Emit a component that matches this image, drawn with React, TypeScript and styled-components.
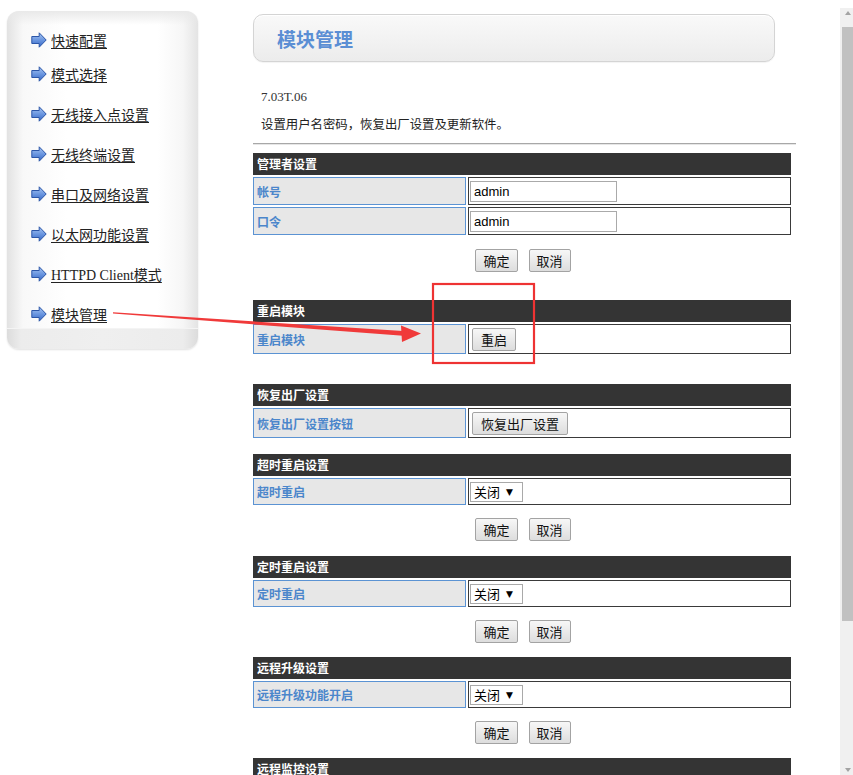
import React from 'react';
import styled, { createGlobalStyle } from 'styled-components';

const GlobalStyle = createGlobalStyle`
  html, body {
    margin: 0;
    padding: 0;
    background: #ffffff;
    overflow: hidden;
  }
  body {
    font-family: "Liberation Sans", "Noto Sans CJK SC", sans-serif;
    color: #222;
  }
`;

const CJK = `"Noto Sans CJK SC", "Liberation Sans", sans-serif`;

const Page = styled.div`
  position: relative;
  display: flex;
  align-items: flex-start;
  width: 853px;
  height: 775px;
  overflow: hidden;
`;

// ---------- left menu ----------

const Sidebar = styled.div`
  margin: 11px 0 0 7px;
  width: 191px;
  height: 338px;
  display: flex;
  flex-direction: column;
  border-radius: 12px;
  overflow: hidden;
  box-shadow: 0 1px 2px rgba(0, 0, 0, 0.12);
`;

const Nav = styled.ul`
  flex: 1;
  margin: 0;
  padding: 19px 0 0 24px;
  list-style: none;
  background:
    linear-gradient(to bottom, #e9e9e9 0, rgba(255, 255, 255, 0) 14px),
    linear-gradient(to right, #e2e2e2 0, #f8f8f8 16px, #ffffff 60px, #ffffff 150px, #f6f6f6 176px, #e4e4e4 100%);
`;

const NavItem = styled.li<{ $gap: number }>`
  display: flex;
  align-items: center;
  gap: 4px;
  height: 20px;
  margin-top: ${(p) => p.$gap}px;
`;

const NavLink = styled.a`
  font-family: "Liberation Serif", "Noto Sans CJK SC", serif;
  font-size: 14px;
  color: #222;
  text-decoration: underline;
  text-underline-offset: 2px;
  white-space: nowrap;
`;

const SideFoot = styled.div`
  height: 20px;
  background:
    linear-gradient(to right, #dcdcdc 0, #ececec 14px, #efefef 50%, #ececec 176px, #dcdcdc 100%);
  border-top: 1px solid #f4f4f4;
`;

const BlueArrow = () => (
  <svg width="16" height="16" viewBox="0 0 16 16">
    <defs>
      <linearGradient id="ba" x1="0" y1="0" x2="0" y2="1">
        <stop offset="0" stopColor="#a9c6f2" />
        <stop offset="0.5" stopColor="#6b97e0" />
        <stop offset="1" stopColor="#3566c4" />
      </linearGradient>
    </defs>
    <path d="M0.8 4.5 H8.2 V0.8 L15.2 8 L8.2 15.2 V11.5 H0.8 Z" fill="url(#ba)" stroke="#2b56a8" strokeWidth="1" strokeLinejoin="round" />
  </svg>
);

// ---------- main ----------

const Main = styled.div`
  margin: 14px 0 0 55px;
  width: 543px;
  display: flex;
  flex-direction: column;
`;

const TitleBox = styled.div`
  width: 522px;
  height: 48px;
  box-sizing: border-box;
  border: 1px solid #d4d4d4;
  border-radius: 10px;
  background: linear-gradient(to bottom, #f9f9f9, #ececec);
  box-shadow: inset 0 1px 0 #ffffff, 0 1px 1px rgba(0, 0, 0, 0.05);
  display: flex;
  align-items: center;
  padding-left: 23px;
`;

const Title = styled.h1`
  margin: 0;
  font-family: ${CJK};
  font-size: 19px;
  font-weight: bold;
  color: #5a8ed4;
`;

const Version = styled.div`
  margin: 25px 0 0 8px;
  font-family: "Liberation Serif", serif;
  font-size: 13px;
  line-height: 20px;
  color: #333;
`;

const Intro = styled.div`
  margin: 7px 0 0 8px;
  font-family: ${CJK};
  font-size: 12.4px;
  line-height: 20px;
  color: #222;
`;

const Rule = styled.div`
  margin-top: 9px;
  height: 1px;
  background: #a8a8a8;
  border-bottom: 1px solid #e6e6e6;
`;

const Section = styled.div<{ $top: number }>`
  margin-top: ${(p) => p.$top}px;
  width: 538px;
  display: grid;
  gap: 2px;
`;

const Head = styled.div`
  height: 22px;
  background: #343434;
  color: #ffffff;
  font-family: ${CJK};
  font-size: 12px;
  font-weight: bold;
  line-height: 22px;
  padding-left: 4px;
`;

const Row = styled.div<{ $h: number }>`
  display: grid;
  grid-template-columns: 213px 1fr;
  gap: 2px;
  height: ${(p) => p.$h}px;
`;

const Label = styled.div`
  box-sizing: border-box;
  border: 1px solid #5b93d3;
  background: #e7e7e7;
  color: #4b86cb;
  font-family: ${CJK};
  font-size: 12px;
  font-weight: bold;
  display: flex;
  align-items: center;
  padding-left: 3px;
  white-space: nowrap;
`;

const Value = styled.div`
  box-sizing: border-box;
  border: 1px solid #3a3a3a;
  display: flex;
  align-items: center;
  padding-left: 1px;
`;

const TextInput = styled.input`
  box-sizing: border-box;
  width: 147px;
  height: 21px;
  border: 1px solid #aaaaaa;
  padding: 0 3px;
  font-family: "Liberation Sans", sans-serif;
  font-size: 13px;
  color: #000;
  outline: none;
`;

const Button = styled.button`
  box-sizing: border-box;
  height: 23px;
  padding: 0 7px;
  border: 1px solid #a3a3a3;
  border-radius: 2px;
  background: linear-gradient(to bottom, #f7f7f7, #dddddd);
  font-family: ${CJK};
  font-size: 13px;
  color: #111;
  line-height: 21px;
`;

const CellButton = styled(Button)`
  margin-left: 2px;
  padding: 0 8px;
`;

const Select = styled.div`
  box-sizing: border-box;
  width: 53px;
  height: 20px;
  border: 1px solid #a9a9a9;
  display: flex;
  align-items: center;
  gap: 6px;
  padding-left: 3px;
  font-family: ${CJK};
  font-size: 13px;
  color: #000;

  span {
    font-size: 9px;
    font-family: "DejaVu Sans", sans-serif;
  }
`;

const Actions = styled.div<{ $top: number }>`
  margin-top: ${(p) => p.$top}px;
  width: 540px;
  display: flex;
  justify-content: center;
  gap: 11px;
`;

// ---------- scrollbar ----------

const ScrollBar = styled.div`
  margin: 8px 0 0 auto;
  width: 13px;
  height: 767px;
  background: #f0f0f0;
  display: flex;
  flex-direction: column;
  align-items: flex-end;
`;

const ScrollArrow = styled.div<{ $down?: boolean }>`
  width: 11px;
  height: 17px;
  display: flex;
  align-items: ${(p) => (p.$down ? 'flex-end' : 'flex-start')};
  justify-content: center;
  margin-top: ${(p) => (p.$down ? 'auto' : '0')};
  padding: 3px 0;
  box-sizing: border-box;

  &::after {
    content: '';
    border-left: 3.5px solid transparent;
    border-right: 3.5px solid transparent;
    ${(p) => (p.$down ? 'border-top: 4px solid #a3a3a3;' : 'border-bottom: 4px solid #a3a3a3;')}
  }
`;

const Thumb = styled.div`
  width: 11px;
  height: 594px;
  margin-top: 2px;
  background: #c1c1c1;
`;

// ---------- annotation ----------

const Annotation = styled.svg`
  position: absolute;
  left: 0;
  top: 0;
  pointer-events: none;
`;

const menu = [
  { text: '快速配置', gap: 0 },
  { text: '模式选择', gap: 14 },
  { text: '无线接入点设置', gap: 20 },
  { text: '无线终端设置', gap: 20 },
  { text: '串口及网络设置', gap: 20 },
  { text: '以太网功能设置', gap: 20 },
  { text: 'HTTPD Client模式', gap: 20 },
  { text: '模块管理', gap: 20 },
];

const OffSelect = () => (
  <Select>
    关闭<span>▼</span>
  </Select>
);

const OkCancel: React.FC<{ top: number }> = ({ top }) => (
  <Actions $top={top}>
    <Button>确定</Button>
    <Button>取消</Button>
  </Actions>
);

export default function App() {
  return (
    <>
      <GlobalStyle />
      <Page>
        <Sidebar>
          <Nav>
            {menu.map((m) => (
              <NavItem key={m.text} $gap={m.gap}>
                <BlueArrow />
                <NavLink>{m.text}</NavLink>
              </NavItem>
            ))}
          </Nav>
          <SideFoot />
        </Sidebar>

        <Main>
          <TitleBox>
            <Title>模块管理</Title>
          </TitleBox>
          <Version>7.03T.06</Version>
          <Intro>设置用户名密码，恢复出厂设置及更新软件。</Intro>
          <Rule />

          <Section $top={8}>
            <Head>管理者设置</Head>
            <Row $h={28}>
              <Label>帐号</Label>
              <Value>
                <TextInput defaultValue="admin" />
              </Value>
            </Row>
            <Row $h={28}>
              <Label>口令</Label>
              <Value>
                <TextInput defaultValue="admin" />
              </Value>
            </Row>
          </Section>
          <OkCancel top={14} />

          <Section $top={28}>
            <Head>重启模块</Head>
            <Row $h={30}>
              <Label>重启模块</Label>
              <Value>
                <CellButton>重启</CellButton>
              </Value>
            </Row>
          </Section>

          <Section $top={30}>
            <Head>恢复出厂设置</Head>
            <Row $h={30}>
              <Label>恢复出厂设置按钮</Label>
              <Value>
                <CellButton>恢复出厂设置</CellButton>
              </Value>
            </Row>
          </Section>

          <Section $top={16}>
            <Head>超时重启设置</Head>
            <Row $h={27}>
              <Label>超时重启</Label>
              <Value>
                <OffSelect />
              </Value>
            </Row>
          </Section>
          <OkCancel top={13} />

          <Section $top={15}>
            <Head>定时重启设置</Head>
            <Row $h={27}>
              <Label>定时重启</Label>
              <Value>
                <OffSelect />
              </Value>
            </Row>
          </Section>
          <OkCancel top={13} />

          <Section $top={14}>
            <Head>远程升级设置</Head>
            <Row $h={27}>
              <Label>远程升级功能开启</Label>
              <Value>
                <OffSelect />
              </Value>
            </Row>
          </Section>
          <OkCancel top={13} />

          <Section $top={14}>
            <Head>远程监控设置</Head>
            <Row $h={27}>
              <Label>远程监控功能开启</Label>
              <Value>
                <OffSelect />
              </Value>
            </Row>
          </Section>
        </Main>

        <ScrollBar>
          <ScrollArrow />
          <Thumb />
          <ScrollArrow $down />
        </ScrollBar>

        <Annotation width="853" height="775" viewBox="0 0 853 775">
          <rect x="433" y="284" width="101" height="79" fill="none" stroke="#ee3333" strokeWidth="2.2" />
          <polygon points="113,312.3 113,313.6 403,335.8 403,331" fill="#f03a3a" />
          <polygon points="401,325.5 421,333.6 402,342" fill="#f03a3a" />
        </Annotation>
      </Page>
    </>
  );
}
